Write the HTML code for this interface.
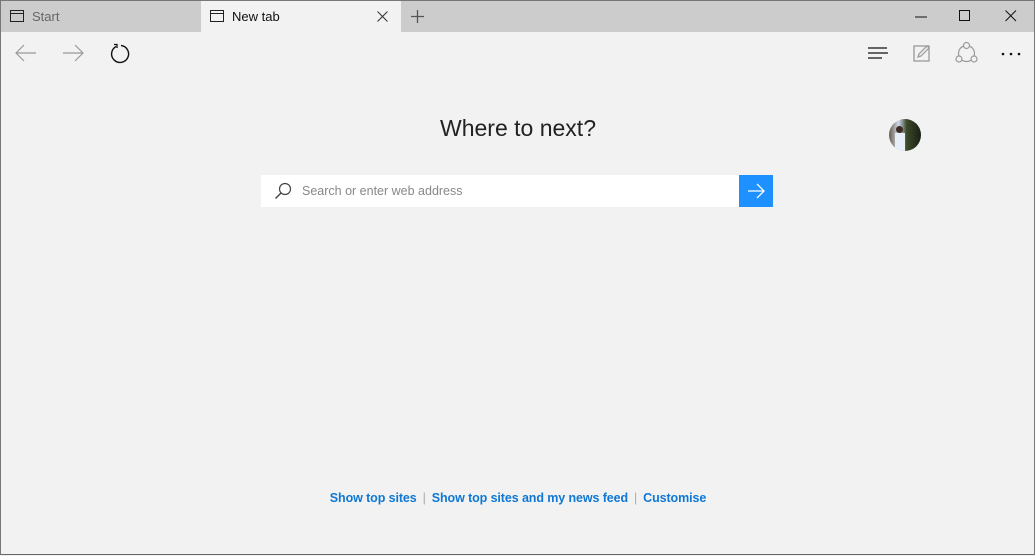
<!DOCTYPE html>
<html><head><meta charset="utf-8"><style>
*{margin:0;padding:0;box-sizing:border-box}
body{width:1035px;height:556px;overflow:hidden;background:#f2f2f2;font-family:"Segoe UI","Liberation Sans",sans-serif;position:relative}
.frame{position:absolute;left:0;top:0;width:1035px;height:555px;border:1px solid #777;border-bottom:1px solid #666}
.tabbar{position:absolute;left:1px;top:1px;width:1033px;height:31px;background:#cccccc}
.tab{position:absolute;top:0;height:32px;font-size:13px;color:#444;line-height:33px}
.abs{position:absolute}
.link{color:#0f78d4;font-weight:bold;font-size:12.5px}
.sep{color:#aaa;font-size:12.5px;margin:0 6px}
</style></head><body>
<div class="tabbar"></div>
<div class="tab" style="left:1px;width:200px"><svg class="abs" style="left:9px;top:10px" width="14" height="12"><rect x="0.5" y="0.5" width="13" height="11" fill="none" stroke="#222"/><line x1="0" y1="3.5" x2="14" y2="3.5" stroke="#222"/></svg><span class="abs" style="left:31px;color:#666">Start</span></div>
<div class="tab" style="left:201px;width:200px;background:#f2f2f2"><svg class="abs" style="left:9px;top:10px" width="14" height="12"><rect x="0.5" y="0.5" width="13" height="11" fill="none" stroke="#222"/><line x1="0" y1="3.5" x2="14" y2="3.5" stroke="#222"/></svg><span class="abs" style="left:31px;color:#111">New tab</span>
<svg class="abs" style="left:176px;top:11px" width="11" height="11"><path d="M0.5 0.5L10.5 10.5M10.5 0.5L0.5 10.5" stroke="#333"/></svg></div>
<svg class="abs" style="left:411px;top:10px" width="13" height="13"><path d="M6.5 0V13M0 6.5H13" stroke="#555" stroke-width="1.3"/></svg>
<svg class="abs" style="left:915px;top:16px" width="12" height="2"><path d="M0 1H12" stroke="#111"/></svg>
<svg class="abs" style="left:959px;top:10px" width="12" height="12"><rect x="0.5" y="0.5" width="10" height="10" fill="none" stroke="#111"/></svg>
<svg class="abs" style="left:1005px;top:10px" width="12" height="12"><path d="M0.5 0.5L11 11M11 0.5L0.5 11" stroke="#111"/></svg>
<svg class="abs" style="left:15px;top:44px" width="22" height="18"><path d="M1 9H21M9 1L1 9L9 17" fill="none" stroke="#999" stroke-width="1.2"/></svg>
<svg class="abs" style="left:62px;top:44px" width="22" height="18"><path d="M1 9H21M13 1L21 9L13 17" fill="none" stroke="#999" stroke-width="1.2"/></svg>
<svg class="abs" style="left:110px;top:43px" width="22" height="22"><path d="M6 3.5A8.5 8.5 0 1 0 11 2.5" fill="none" stroke="#111" stroke-width="1.4"/><path d="M4 1.5H7V5" fill="none" stroke="#111" stroke-width="1.3"/></svg>
<svg class="abs" style="left:867px;top:47px" width="22" height="14"><path d="M1 1H20M1 6H21M1 11H15" stroke="#111" stroke-width="1.2"/></svg>
<svg class="abs" style="left:913px;top:44px" width="18" height="18"><rect x="1" y="2" width="15" height="15" fill="none" stroke="#999" stroke-width="1.3"/><path d="M5 13L6 10L14 2L16 4L8 12Z" fill="none" stroke="#999" stroke-width="1.2"/></svg>
<svg class="abs" style="left:955px;top:42px" width="23" height="23"><circle cx="11.5" cy="11.5" r="8" fill="none" stroke="#999" stroke-width="1.2"/><circle cx="11.5" cy="3.5" r="3" fill="#f2f2f2" stroke="#999" stroke-width="1.2"/><circle cx="4" cy="17" r="3" fill="#f2f2f2" stroke="#999" stroke-width="1.2"/><circle cx="19" cy="17" r="3" fill="#f2f2f2" stroke="#999" stroke-width="1.2"/></svg>
<svg class="abs" style="left:1001px;top:52px" width="20" height="4"><circle cx="2" cy="2" r="1.3" fill="#111"/><circle cx="10" cy="2" r="1.3" fill="#111"/><circle cx="18" cy="2" r="1.3" fill="#111"/></svg>
<div class="abs" style="left:889px;top:119px;width:32px;height:32px;border-radius:50%;background:linear-gradient(90deg,#6a5a4a 0%,#d0d8e8 30%,#3a4a2a 55%,#1a1f15 100%);overflow:hidden"><div class="abs" style="left:6px;top:14px;width:10px;height:18px;background:#e8eef8"></div><div class="abs" style="left:7px;top:7px;width:7px;height:7px;border-radius:50%;background:#3a2a20"></div></div>
<div class="abs" style="left:0;width:1035px;top:115px;text-align:center;font-size:23px;color:#222;padding-left:1px">Where to next?</div>
<div class="abs" style="left:261px;top:175px;width:480px;height:32px;background:#fff"></div>
<svg class="abs" style="left:274px;top:182px" width="18" height="18"><circle cx="11" cy="7" r="5.5" fill="none" stroke="#444" stroke-width="1.2"/><path d="M7 11L1.5 16.5" stroke="#444" stroke-width="1.4"/></svg>
<div class="abs" style="left:302px;top:184px;font-size:12.5px;color:#888">Search or enter web address</div>
<div class="abs" style="left:739px;top:175px;width:34px;height:32px;background:#1e90ff"></div>
<svg class="abs" style="left:748px;top:183px" width="18" height="16"><path d="M0 8H16M9 1L16 8L9 15" fill="none" stroke="#fff" stroke-width="1.3"/></svg>
<div class="abs" style="left:0;width:1035px;top:489px;text-align:center;padding-left:1px;letter-spacing:-0.1px"><span class="link">Show top sites</span><span class="sep">|</span><span class="link">Show top sites and my news feed</span><span class="sep">|</span><span class="link">Customise</span></div>
<div class="frame"></div>
</body></html>
